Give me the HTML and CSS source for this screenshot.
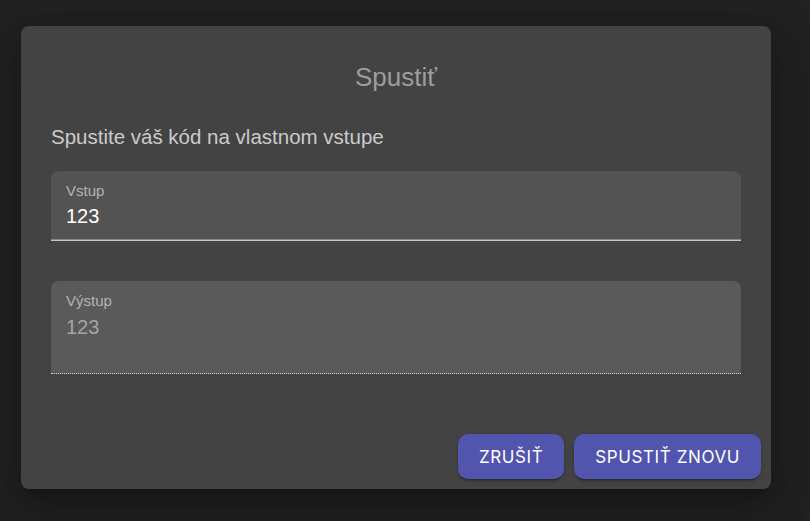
FILE: index.html
```html
<!DOCTYPE html>
<html>
<head>
<meta charset="utf-8">
<link rel="stylesheet" href="styles.css">
</head>
<body>
<div class="backdrop">
  <div class="dialog">
    <h2 class="title">Spustiť</h2>
    <div class="content">
      <p class="desc">Spustite váš kód na vlastnom vstupe</p>
      <div class="field field-input">
        <label class="label">Vstup</label>
        <div class="value">123</div>
      </div>
      <div class="field field-output">
        <label class="label">Výstup</label>
        <div class="value muted">123</div>
      </div>
    </div>
    <div class="actions">
      <button class="btn">ZRUŠIŤ</button>
      <button class="btn">SPUSTIŤ ZNOVU</button>
    </div>
  </div>
</div>
</body>
</html>
```
FILE: styles.css
```css
html, body {
  margin: 0;
  padding: 0;
  background: #212121;
  width: 810px;
  height: 521px;
  overflow: hidden;
}
.backdrop {
  padding: 26px 0 0 21px;
}
.dialog {
  width: 750px;
  height: 463px;
  box-sizing: border-box;
  background: #434343;
  border-radius: 8px;
  box-shadow: 0 11px 15px -7px rgba(0,0,0,.2), 0 24px 38px 3px rgba(0,0,0,.14), 0 9px 46px 8px rgba(0,0,0,.12);
  display: flex;
  flex-direction: column;
  font-family: "Liberation Sans", Arial, sans-serif;
}
.title {
  margin: 0;
  padding-top: 36px;
  height: 30px;
  line-height: 30px;
  text-align: center;
  font-weight: 400;
  font-size: 26px;
  color: #9d9d9d;
}
.content {
  padding: 0 30px;
}
.desc {
  margin: 33px 0 0;
  font-size: 20.5px;
  line-height: 24px;
  color: #cbcbcb;
}
.field {
  margin-top: 22px;
  border-radius: 8px 8px 0 0;
  padding: 11px 15px 0;
  box-sizing: border-box;
}
.field-input {
  height: 70px;
  background: #535353;
  border-bottom: 1px solid #c8c8c8;
  box-shadow: inset 0 -1px 0 #888;
}
.field-output {
  margin-top: 40px;
  height: 93px;
  background: #5a5a5a;
  border-bottom: 1px dotted #d0d0d0;
}
.label {
  display: block;
  font-size: 15px;
  line-height: 18px;
  color: #b3b3b3;
}
.value {
  margin-top: 2px;
  font-size: 20px;
  line-height: 28px;
  color: #ffffff;
}
.value.muted {
  margin-top: 3px;
  color: #a4a4a4;
}
.actions {
  margin-top: auto;
  display: flex;
  justify-content: flex-end;
  gap: 10px;
  padding: 0 10px 10px 0;
}
.btn {
  height: 45px;
  border: none;
  border-radius: 10px;
  background: #5155ad;
  color: #ffffff;
  font-family: Inter, "Noto Sans", sans-serif;
  font-size: 17px;
  letter-spacing: 0.6px;
  padding: 0 21px;
  box-shadow: 0 3px 1px -2px rgba(0,0,0,.2), 0 2px 2px 0 rgba(0,0,0,.14), 0 1px 5px 0 rgba(0,0,0,.12);
}
```
